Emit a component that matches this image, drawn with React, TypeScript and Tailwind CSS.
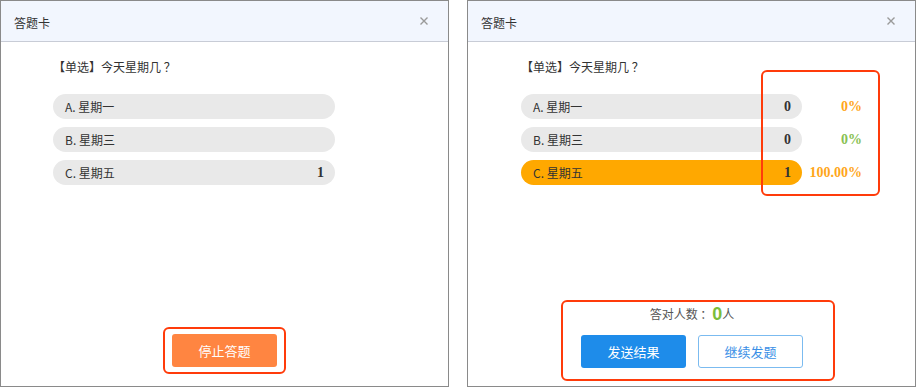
import React from "react";

const cjk = { fontFamily: '"Noto Sans CJK SC", "Noto Sans", sans-serif' };
const serif = { fontFamily: '"Liberation Serif", "Noto Serif", serif' };

type Opt = { label: string; count?: string; pct?: string; pctColor?: string; active?: boolean };

function Header() {
  return (
    <div className="flex h-[41px] shrink-0 items-center justify-between border-b border-[#c8ccd6] bg-[#f2f6fe] pl-[13px] pr-[19px]">
      <span className="pt-[3px] text-[12px] text-[#333]">答题卡</span>
      <svg width="10" height="10" viewBox="0 0 10 10" className="mb-[1px]">
        <path d="M1.5 1.5 L8.5 8.5 M8.5 1.5 L1.5 8.5" stroke="#9a9a9a" strokeWidth="1.4" />
      </svg>
    </div>
  );
}

function OptionRow({ o, width, showPct }: { o: Opt; width: number; showPct: boolean }) {
  return (
    <div className="flex items-center">
      <div
        className={`flex h-[25px] items-center justify-between rounded-full pl-[12px] pr-[11px] ${o.active ? "bg-[#ffa800]" : "bg-[#e9e9e9]"}`}
        style={{ width }}
      >
        <span className="text-[12px] text-[#333]">{o.label}</span>
        {o.count && (
          <span className="text-[14px] font-bold text-[#333]" style={serif}>
            {o.count}
          </span>
        )}
      </div>
      {showPct && (
        <span className="w-[60px] text-right text-[14px] font-bold" style={{ ...serif, color: o.pctColor }}>
          {o.pct}
        </span>
      )}
    </div>
  );
}

export default function App() {
  const left: Opt[] = [
    { label: "A. 星期一" },
    { label: "B. 星期三" },
    { label: "C. 星期五", count: "1" },
  ];
  const right: Opt[] = [
    { label: "A. 星期一", count: "0", pct: "0%", pctColor: "#ffa61a" },
    { label: "B. 星期三", count: "0", pct: "0%", pctColor: "#88c152" },
    { label: "C. 星期五", count: "1", pct: "100.00%", pctColor: "#ffa61a", active: true },
  ];
  return (
    <div className="flex h-[389px] w-[918px] gap-[18px] bg-white" style={cjk}>
      {/* Left panel */}
      <div className="flex h-[387px] w-[449px] flex-col border border-[#8a8a8a] bg-white">
        <Header />
        <div className="flex flex-1 flex-col pl-[52px]">
          <div className="mt-[15px] h-[20px] text-[12px] leading-[20px] text-[#333]">【单选】今天星期几 ？</div>
          <div className="mt-[17px] flex flex-col gap-[8px]">
            {left.map((o) => (
              <OptionRow key={o.label} o={o} width={282} showPct={false} />
            ))}
          </div>
        </div>
        <div className="mb-[12px] flex justify-center">
          <div className="rounded-[6px] border-2 border-[#ff3b0a] px-[7px] py-[5px]">
            <button className="flex h-[33px] w-[105px] items-center justify-center rounded-[3px] bg-[#ff8541] text-[13px] text-white">
              停止答题
            </button>
          </div>
        </div>
      </div>

      {/* Right panel */}
      <div className="relative flex h-[387px] w-[449px] flex-col border border-[#8a8a8a] bg-white">
        <Header />
        <div className="flex flex-1 flex-col pl-[53px]">
          <div className="mt-[15px] h-[20px] text-[12px] leading-[20px] text-[#333]">【单选】今天星期几 ？</div>
          <div className="mt-[17px] flex flex-col gap-[8px]">
            {right.map((o) => (
              <OptionRow key={o.label} o={o} width={281} showPct={true} />
            ))}
          </div>
        </div>
        <div className="mb-[5px] ml-[93px] self-start rounded-[6px] border-2 border-[#ff3b0a] pb-[11px] pl-[18px] pr-[30px] pt-[2px]">
          <div className="flex flex-col items-center">
            <div className="flex h-[20px] items-center text-[12px] text-[#555]">
              答对人数 ：<span className="text-[18px] font-bold leading-none text-[#7cbd3a]" style={{ fontFamily: '"Liberation Sans", sans-serif' }}>0</span>人
            </div>
            <div className="mt-[11px] flex gap-[12px]">
              <button className="flex h-[33px] w-[105px] items-center justify-center rounded-[3px] bg-[#1e8cea] text-[13px] text-white">
                发送结果
              </button>
              <button className="flex h-[33px] w-[105px] items-center justify-center rounded-[3px] border border-[#7bbbf0] bg-white text-[13px] text-[#3a8fe6]">
                继续发题
              </button>
            </div>
          </div>
        </div>
        <div className="absolute left-[293px] top-[69px] h-[126px] w-[119px] rounded-[6px] border-2 border-[#ff3b0a]" />
      </div>
    </div>
  );
}
